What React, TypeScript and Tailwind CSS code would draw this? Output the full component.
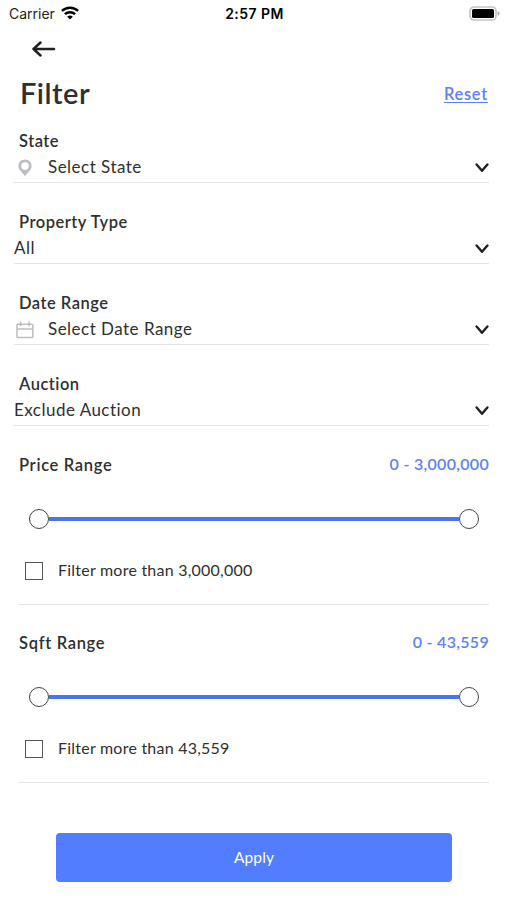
import React from 'react'

const PinIcon = () => (
  <svg width="16" height="18" viewBox="0 0 15 18" fill="#bcbec3">
    <path fillRule="evenodd" d="M7.500.5C3.700.5.9 3.300.9 6.900c0 3.900 3.800 6.300 6.600 10.300 2.800-4 6.600-6.400 6.600-10.300C14.100 3.300 11.300.5 7.500.5Zm0 2.800a3.800 3.800 0 1 1 0 7.600 3.800 3.800 0 0 1 0-7.600Z" />
  </svg>
)

const CalendarIcon = () => (
  <svg className="-ml-px" width="18" height="18" viewBox="0 0 18 18" fill="none" stroke="#bcbec2" strokeWidth="1.500">
    <rect x="1" y="3.200" width="15.800" height="13.400" rx="0.800" />
    <path d="M1 8h15.800M4.700.6v4.600M13.100.6v4.600" />
  </svg>
)

const ChevronIcon = () => (
  <svg width="14" height="10" viewBox="0 0 14 10" fill="none" stroke="#222" strokeWidth="2.400" strokeLinecap="round" strokeLinejoin="round">
    <path d="M1.600 1.400 7 7.800l5.400-6.400" />
  </svg>
)

const StatusBar = () => (
  <div className="grid h-7 grid-cols-3 items-center pl-[9px] pr-[7px] font-['Inter',sans-serif] text-black">
    <div className="flex items-center gap-[6px]">
      <span className="-mt-px text-[14px] text-[#222]">Carrier</span>
      <svg className="-mt-[2px]" width="18" height="14" viewBox="0 0 18 14" fill="none" stroke="#000" strokeWidth="2.500">
        <path d="M.9 4.900a11.700 11.700 0 0 1 16.200 0M3.900 8.200a7.400 7.400 0 0 1 10.200 0" />
        <path d="M9 13.600 6.200 10.700a4.100 4.100 0 0 1 5.600 0Z" fill="#000" stroke="none" />
      </svg>
    </div>
    <span className="-mt-[2px] text-center text-[14px] font-semibold tracking-[0.450px]">2:57 PM</span>
    <svg className="-mt-[2px] justify-self-end" width="31" height="15" viewBox="0 0 31 15">
      <rect x="1" y="1" width="26" height="13" rx="4" fill="#fff" stroke="#c4c4c4" strokeWidth="1.700" />
      <rect x="3" y="3" width="22" height="9" rx="1.500" fill="#000" />
      <path d="M28.600 5v5c1.200-.4 2-1.300 2-2.500s-.8-2.100-2-2.500Z" fill="#aaa" />
    </svg>
  </div>
)

type FieldProps = {
  label: string
  value: string
  icon?: React.ReactNode
}

const SelectField = ({ label, value, icon }: FieldProps) => (
  <div className="mb-[27px]">
    <div className="pl-[5px] text-[16.500px] font-semibold leading-6 tracking-[0.500px]">{label}</div>
    <button className="flex h-[30px] w-full items-center justify-between border-b border-[#e4e4e4] text-left">
      <span className="flex items-center">
        {icon && <span className="flex w-[34px] pl-[3px]">{icon}</span>}
        <span className="-mt-px text-[17px] leading-6 tracking-[0.480px]">{value}</span>
      </span>
      <ChevronIcon />
    </button>
  </div>
)

const Thumb = () => <span className="size-5 shrink-0 rounded-full border-[1.500px] border-[#444] bg-white" />

type RangeProps = {
  label: string
  range: string
  max: string
}

const RangeSection = ({ label, range, max }: RangeProps) => (
  <div className="ml-[5px] h-[178px]">
    <div className="flex h-6 items-center justify-between">
      <span className="text-[16.500px] font-semibold tracking-[0.680px]">{label}</span>
      <span className="-mt-[2px] text-[16px] font-semibold tracking-[0.300px] text-[#5b82f5]">{range}</span>
    </div>
    <div className="mt-8 flex h-5 items-center px-[10px]">
      <Thumb />
      <span className="h-1 flex-1 bg-[#4a74ee]" />
      <Thumb />
    </div>
    <label className="mt-[30px] flex h-6 items-center">
      <span className="ml-[6px] size-[18px] border-[1.500px] border-[#555]" />
      <span className="-mt-[3px] ml-[15px] text-[16px] tracking-[0.230px]">Filter more than {max}</span>
    </label>
    <div className="mt-[21px] h-px bg-[#e4e4e4]" />
  </div>
)

export default function App() {
  return (
    <div className="h-[900px] w-full bg-white font-['Lato',sans-serif] text-[#2f2f2f]">
      <StatusBar />

      <div className="flex h-[42px] items-center pl-8">
        <svg width="24" height="16" viewBox="0 0 24 16" fill="none" stroke="#222" strokeWidth="2.500" strokeLinecap="round" strokeLinejoin="round">
          <path d="M22 8H1.500M8.500 1.500 1.500 8l7 6.500" />
        </svg>
      </div>

      <div className="flex h-12 items-center justify-between pl-5 pr-[19px]">
        <h1 className="-mt-[3px] text-[29px] font-semibold tracking-[0.500px]">Filter</h1>
        <button className="mt-px text-[16.500px] font-semibold tracking-[0.700px] text-[#5b82f5] underline underline-offset-2">Reset</button>
      </div>

      <div className="pl-[14px] pr-[18px] pt-[11px]">
        <SelectField label="State" value="Select State" icon={<PinIcon />} />
        <SelectField label="Property Type" value="All" />
        <SelectField label="Date Range" value="Select Date Range" icon={<CalendarIcon />} />
        <SelectField label="Auction" value="Exclude Auction" />

        <RangeSection label="Price Range" range="0 - 3,000,000" max="3,000,000" />
        <RangeSection label="Sqft Range" range="0 - 43,559" max="43,559" />
      </div>

      <div className="pl-14 pr-[55px] pt-[24px]">
        <button className="h-[49px] w-full rounded bg-[#527dff] text-[15.500px] tracking-[0.100px] text-white">Apply</button>
      </div>
    </div>
  )
}
